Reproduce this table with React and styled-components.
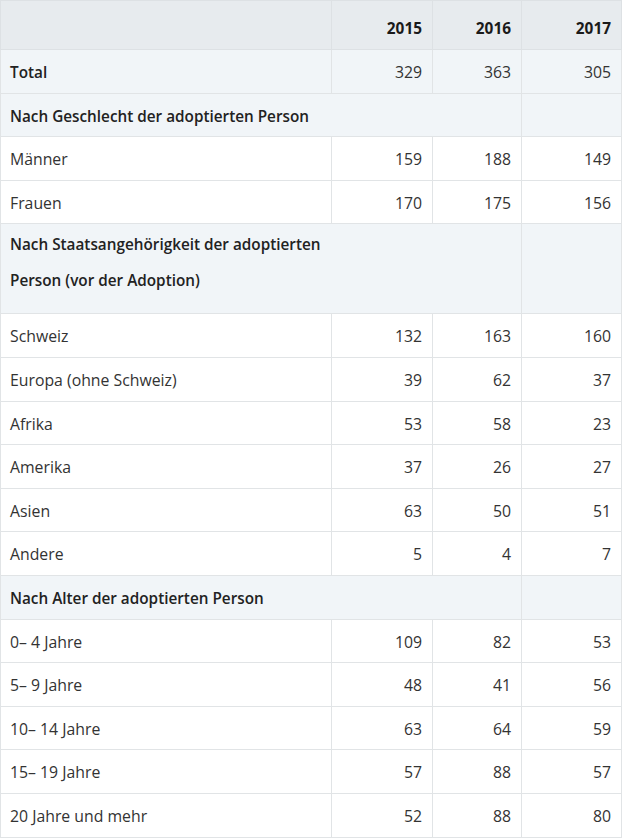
import React from "react";
import styled, { createGlobalStyle } from "styled-components";

const Global = createGlobalStyle`
  html, body { margin: 0; padding: 0; background: #fff; }
  body { font-family: "Open Sans", "Noto Sans", sans-serif; }
`;

const Table = styled.table`
  width: 621px;
  border-collapse: collapse;
  table-layout: fixed;
  font-size: 15px;
  color: #333;
`;

const Col = styled.col`
  width: ${(p) => p.$w}px;
`;

const HeadCell = styled.th`
  height: 49px;
  box-sizing: border-box;
  background: #e7ebee;
  border: 1px solid #dde1e4;
  padding: 0 10px 2px;
  line-height: 36px;
  font-size: 15.4px;
  vertical-align: bottom;
  text-align: right;
  font-weight: 700;
  color: #1a1a1a;
`;

const Cell = styled.td`
  border: 1px solid #e1e4e6;
  padding: ${(p) => (p.$tall ? "2px 10px 15px 9px" : "4px 10px 2.6px 9px")};
  line-height: 36px;
  vertical-align: top;
  text-align: ${(p) => (p.$num ? "right" : "left")};
  font-weight: ${(p) => (p.$bold ? 600 : 400)};
  font-size: ${(p) => (p.$bold ? "15.3px" : "15.8px")};
  background: ${(p) => (p.$shade ? "#f1f5f8" : "#fff")};
  color: ${(p) => (p.$bold ? "#222" : "#333")};
`;

const SectionLabel = styled.span`
  display: block;
  max-width: 318px;
`;

const years = ["2015", "2016", "2017"];

const rows = [
  { type: "total", label: "Total", v: [329, 363, 305] },
  { type: "section", label: "Nach Geschlecht der adoptierten Person" },
  { label: "Männer", v: [159, 188, 149] },
  { label: "Frauen", v: [170, 175, 156] },
  { type: "section", tall: true, label: "Nach Staatsangehörigkeit der adoptierten Person (vor der Adoption)" },
  { label: "Schweiz", v: [132, 163, 160] },
  { label: "Europa (ohne Schweiz)", v: [39, 62, 37] },
  { label: "Afrika", v: [53, 58, 23] },
  { label: "Amerika", v: [37, 26, 27] },
  { label: "Asien", v: [63, 50, 51] },
  { label: "Andere", v: [5, 4, 7] },
  { type: "section", label: "Nach Alter der adoptierten Person" },
  { label: "0– 4 Jahre", v: [109, 82, 53] },
  { label: "5– 9 Jahre", v: [48, 41, 56] },
  { label: "10– 14 Jahre", v: [63, 64, 59] },
  { label: "15– 19 Jahre", v: [57, 88, 57] },
  { label: "20 Jahre und mehr", v: [52, 88, 80] },
];

const colWidths = [331, 101, 89, 100];

export default function App() {
  return (
    <>
      <Global />
      <Table>
        <colgroup>
          {colWidths.map((w, i) => (
            <Col key={i} $w={w} />
          ))}
        </colgroup>
        <thead>
          <tr>
            <HeadCell />
            {years.map((y) => (
              <HeadCell key={y}>{y}</HeadCell>
            ))}
          </tr>
        </thead>
        <tbody>
          {rows.map((r, i) => {
            if (r.type === "section") {
              return (
                <tr key={i}>
                  <Cell colSpan={3} $bold $shade $tall={r.tall}>
                    <SectionLabel>{r.label}</SectionLabel>
                  </Cell>
                  <Cell $shade />
                </tr>
              );
            }
            const total = r.type === "total";
            return (
              <tr key={i}>
                <Cell $bold={total} $shade={total}>
                  {r.label}
                </Cell>
                {r.v.map((n, j) => (
                  <Cell key={j} $num $shade={total}>
                    {n}
                  </Cell>
                ))}
              </tr>
            );
          })}
        </tbody>
      </Table>
    </>
  );
}
